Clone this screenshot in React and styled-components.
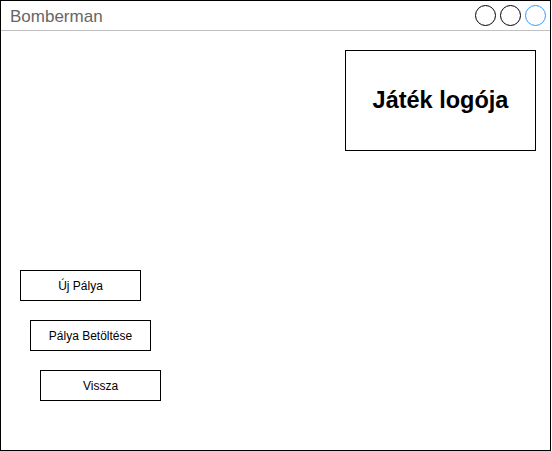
import styled, { createGlobalStyle } from "styled-components"

const GlobalStyle = createGlobalStyle`
    html, body {
        margin: 0;
        padding: 0;
        background: #fff;
    }
    * {
        box-sizing: border-box;
    }
`

const Window = styled.div`
    width: 551px;
    height: 451px;
    border: 1px solid #000;
    background: #fff;
    display: flex;
    flex-direction: column;
    font-family: "Liberation Sans", Arial, sans-serif;
`

const TitleBar = styled.div`
    height: 30px;
    flex-shrink: 0;
    display: flex;
    align-items: center;
    justify-content: space-between;
    padding: 0 4px 0 9px;
    border-bottom: 1px solid #c0c0c0;
`

const Title = styled.span`
    font-size: 17px;
    color: #666;
    line-height: 1;
    margin-top: 1px;
`

const Controls = styled.div`
    display: flex;
    gap: 4px;
`

const Dot = styled.span`
    width: 21px;
    height: 21px;
    border-radius: 50%;
    border: 1px solid ${(props) => props.color || "#000"};
`

const Body = styled.div`
    flex: 1;
    display: flex;
    flex-direction: column;
    padding: 19px 14px 0 19px;
`

const Top = styled.div`
    display: flex;
    justify-content: flex-end;
`

const Logo = styled.div`
    width: 191px;
    height: 101px;
    border: 1px solid #000;
    display: flex;
    align-items: center;
    justify-content: center;
    font-size: 23.5px;
    font-weight: bold;
    color: #000;
`

const Menu = styled.div`
    margin-top: 119px;
    display: flex;
    flex-direction: column;
    gap: 19px;
`

const MenuButton = styled.div`
    width: 121px;
    height: 31px;
    margin-left: ${(props) => props.indent}px;
    border: 1px solid #000;
    display: flex;
    align-items: center;
    justify-content: center;
    font-size: 12px;
    color: #000;
`

const App = () => {
    return (
        <>
            <GlobalStyle />
            <Window>
                <TitleBar>
                    <Title>Bomberman</Title>
                    <Controls>
                        <Dot />
                        <Dot />
                        <Dot color="#3399ff" />
                    </Controls>
                </TitleBar>
                <Body>
                    <Top>
                        <Logo>Játék logója</Logo>
                    </Top>
                    <Menu>
                        <MenuButton indent={0}>Új Pálya</MenuButton>
                        <MenuButton indent={10}>Pálya Betöltése</MenuButton>
                        <MenuButton indent={20}>Vissza</MenuButton>
                    </Menu>
                </Body>
            </Window>
        </>
    )
}

export default App
